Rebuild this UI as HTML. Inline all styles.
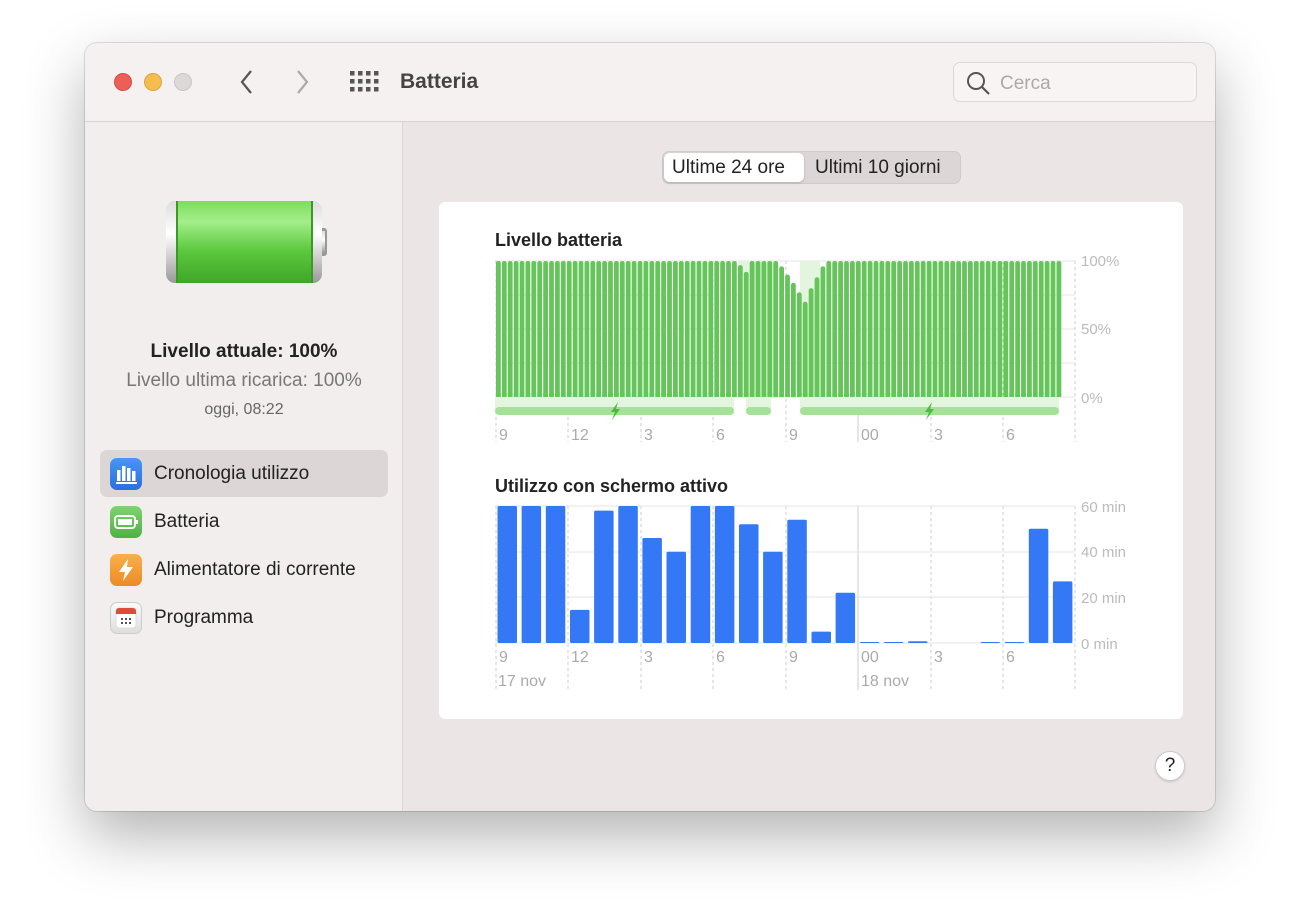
<!DOCTYPE html>
<html><head><meta charset="utf-8"><style>
*{margin:0;padding:0;box-sizing:border-box}
body{width:1300px;height:902px;background:#fff;font-family:"Liberation Sans",sans-serif;position:relative;overflow:hidden}
.win{position:absolute;left:85px;top:43px;width:1130px;height:768px;border-radius:12px;background:#ebe6e5;box-shadow:0 25px 60px rgba(0,0,0,.3),0 0 0 1px rgba(0,0,0,.12);overflow:hidden}
.title{position:absolute;left:0;top:0;width:1130px;height:79px;background:#f6f1f1;border-bottom:1px solid #d9d4d3}
.side{position:absolute;left:0;top:79px;width:318px;height:689px;background:#f3eeee;border-right:1px solid #dcd7d6}
.dot{position:absolute;top:30px;width:18px;height:18px;border-radius:50%}
.t{position:absolute;white-space:nowrap}
.item{position:absolute;left:15px;width:288px;height:47px;border-radius:7px}
.ico{position:absolute;left:10px;top:8px;width:32px;height:32px;border-radius:7px}
.lbl{position:absolute;left:54px;top:13px;font-size:19px;color:#222}
</style></head><body>
<div class="win">
 <div class="title">
  <div class="dot" style="left:29px;background:#ec5f57;border:1px solid #d64a43"></div>
  <div class="dot" style="left:59px;background:#f4bd4f;border:1px solid #dca43c"></div>
  <div class="dot" style="left:89px;background:#dcd8d8;border:1px solid #cbc6c6"></div>
  <svg style="position:absolute;left:150px;top:26px" width="24" height="26"><path d="M16 2 L7 13 L16 24" stroke="#555" stroke-width="2.2" fill="none"/></svg>
  <svg style="position:absolute;left:205px;top:26px" width="24" height="26"><path d="M8 2 L17 13 L8 24" stroke="#aaa" stroke-width="2.2" fill="none"/></svg>
  <svg style="position:absolute;left:264px;top:27px" width="30" height="24" fill="#555">
   <rect x="1" y="1" width="4.5" height="4.5"/><rect x="9" y="1" width="4.5" height="4.5"/><rect x="17" y="1" width="4.5" height="4.5"/><rect x="25" y="1" width="4.5" height="4.5"/>
   <rect x="1" y="9" width="4.5" height="4.5"/><rect x="9" y="9" width="4.5" height="4.5"/><rect x="17" y="9" width="4.5" height="4.5"/><rect x="25" y="9" width="4.5" height="4.5"/>
   <rect x="1" y="17" width="4.5" height="4.5"/><rect x="9" y="17" width="4.5" height="4.5"/><rect x="17" y="17" width="4.5" height="4.5"/><rect x="25" y="17" width="4.5" height="4.5"/></svg>
  <div class="t" style="left:315px;top:27px;font-size:21px;font-weight:bold;color:#444">Batteria</div>
  <div style="position:absolute;left:868px;top:19px;width:244px;height:40px;border:1px solid #ddd8d7;border-radius:7px;background:#f8f4f4">
   <svg style="position:absolute;left:12px;top:8px" width="26" height="26"><circle cx="10" cy="10" r="8" stroke="#555" stroke-width="2" fill="none"/><path d="M16 16 L23 23" stroke="#555" stroke-width="2.2"/></svg>
   <div class="t" style="left:46px;top:10px;font-size:19px;color:#aaa">Cerca</div>
  </div>
 </div>
 <div class="side">
  <svg style="position:absolute;left:80px;top:78px" width="165" height="86">
   <defs><linearGradient id="g" x1="0" y1="0" x2="0" y2="1"><stop offset="0" stop-color="#7edc5e"/><stop offset=".25" stop-color="#a4ee8a"/><stop offset=".6" stop-color="#5cc93e"/><stop offset="1" stop-color="#3fa52a"/></linearGradient>
   <linearGradient id="c" x1="0" y1="0" x2="0" y2="1"><stop offset="0" stop-color="#ddd"/><stop offset=".4" stop-color="#fff"/><stop offset="1" stop-color="#999"/></linearGradient></defs>
   <rect x="150" y="28" width="12" height="28" rx="3" fill="#999"/><rect x="152" y="31" width="8" height="22" fill="url(#c)"/>
   <rect x="1" y="1" width="156" height="82" rx="9" fill="url(#c)"/>
   <rect x="11" y="1" width="137" height="82" fill="url(#g)"/>
   <rect x="11" y="1" width="2" height="82" fill="#3b9a26"/><rect x="146" y="1" width="2" height="82" fill="#3b9a26"/>
  </svg>
  <div class="t" style="left:0;width:318px;text-align:center;top:219px;font-size:19px;font-weight:bold;color:#222">Livello attuale: 100%</div>
  <div class="t" style="left:0;width:318px;text-align:center;top:248px;font-size:19px;color:#777">Livello ultima ricarica: 100%</div>
  <div class="t" style="left:0;width:318px;text-align:center;top:279px;font-size:16px;color:#666">oggi, 08:22</div>
  <div class="item" style="top:328px;background:#dcd6d6"><div class="ico" style="background:linear-gradient(#4a95f5,#2a6fe0)"><svg width="32" height="32" fill="#fff"><rect x="7" y="12" width="3.5" height="11"/><rect x="12" y="8" width="3.5" height="15"/><rect x="17" y="10" width="3.5" height="13"/><rect x="22" y="13" width="3.5" height="10"/><rect x="6" y="24" width="21" height="2"/></svg></div><div class="lbl">Cronologia utilizzo</div></div>
  <div class="item" style="top:376px"><div class="ico" style="background:linear-gradient(#7ed46e,#4eb144)"><svg width="32" height="32"><rect x="5" y="10" width="20" height="12" rx="3" stroke="#fff" stroke-width="2" fill="none"/><rect x="8" y="13" width="14" height="6" fill="#fff"/><rect x="26" y="14" width="2" height="4" fill="#fff"/></svg></div><div class="lbl">Batteria</div></div>
  <div class="item" style="top:424px"><div class="ico" style="background:linear-gradient(#f8b04c,#ec8a26)"><svg width="32" height="32"><path d="M18 5 L9 18 H15 L13 27 L23 13 H17 Z" fill="#fff"/></svg></div><div class="lbl">Alimentatore di corrente</div></div>
  <div class="item" style="top:472px"><div class="ico" style="background:linear-gradient(#fafafa,#dedede);border:1px solid #ccc"><svg width="30" height="30"><rect x="5" y="5" width="20" height="20" rx="3" fill="#fff" stroke="#ddd"/><path d="M5 8 a3 3 0 0 1 3 -3 h14 a3 3 0 0 1 3 3 v3 h-20z" fill="#e04a3d"/><g fill="#555"><rect x="10" y="15" width="2" height="2"/><rect x="14" y="15" width="2" height="2"/><rect x="18" y="15" width="2" height="2"/><rect x="10" y="19" width="2" height="2"/><rect x="14" y="19" width="2" height="2"/><rect x="18" y="19" width="2" height="2"/></g></svg></div><div class="lbl">Programma</div></div>
 </div>
 <div style="position:absolute;left:577px;top:108px;width:299px;height:33px;border-radius:7px;background:#dcd7d6;border:1px solid #d0cbca">
  <div style="position:absolute;left:1px;top:1px;width:140px;height:29px;background:#fff;border-radius:6px;box-shadow:0 1px 2px rgba(0,0,0,.2)"></div>
  <div class="t" style="left:9px;top:5px;font-size:19px;color:#222">Ultime 24 ore</div>
  <div class="t" style="left:152px;top:5px;font-size:19px;color:#222">Ultimi 10 giorni</div>
 </div>
 <div style="position:absolute;left:354px;top:159px;width:744px;height:517px;background:#fff;border-radius:6px"></div>
 <div style="position:absolute;left:1070px;top:708px;width:30px;height:30px;border-radius:50%;background:#fff;border:1px solid #ccc;box-shadow:0 1px 2px rgba(0,0,0,.15);text-align:center;font-size:19px;line-height:28px;color:#222">?</div>
</div>
<svg id="ch" style="position:absolute;left:0;top:0" width="1300" height="902" font-family="Liberation Sans, sans-serif"></svg>
<script>
var s='';
s+='<text x="495" y="246" font-size="18" font-weight="bold" fill="#222">Livello batteria</text>';
s+='<text x="495" y="492" font-size="18" font-weight="bold" fill="#222">Utilizzo con schermo attivo</text>';
[261,295,329,363,397].forEach(function(y){s+='<line x1="495" x2="1075" y1="'+y+'" y2="'+y+'" stroke="#e6e6e6"/>';});
var vx=[496,568,641,713,786,858,931,1003,1075];
vx.forEach(function(x,i){s+='<line x1="'+x+'" x2="'+x+'" y1="261" y2="442" stroke="#ccc" stroke-dasharray="'+(i==5?'':'3,3')+'"/>';
 s+='<line x1="'+x+'" x2="'+x+'" y1="506" y2="690" stroke="#ccc" stroke-dasharray="'+(i==5?'':'3,3')+'"/>';});
s+='<rect x="495" y="397" width="239" height="17" fill="#e3f5df"/><rect x="746" y="397" width="25" height="17" fill="#e3f5df"/><rect x="800" y="397" width="259" height="17" fill="#e3f5df"/>';
s+='<rect x="738" y="261" width="40" height="136" fill="#e3f5df"/><rect x="800" y="261" width="20" height="136" fill="#e3f5df"/>';
s+='<rect x="495" y="407" width="239" height="8" rx="4" fill="#a6e19a"/><rect x="746" y="407" width="25" height="8" rx="4" fill="#a6e19a"/><rect x="800" y="407" width="259" height="8" rx="4" fill="#a6e19a"/>';
[615,929].forEach(function(x){s+='<path d="M'+(x+3)+' 402 L'+(x-4)+' 412 H'+x+' L'+(x-3)+' 420 L'+(x+5)+' 409 H'+(x+1)+' Z" fill="#4cbb3c"/>';});
var lv={41:97,42:92,48:96,49:90,50:84,51:77,52:70,53:80,54:88,55:96};
for(var i=0;i<96;i++){var v=lv[i]||100;var x=496+i*5.9;var h=136*v/100;s+='<rect x="'+x.toFixed(1)+'" y="'+(397-h).toFixed(1)+'" width="4.8" height="'+h.toFixed(1)+'" rx="2.2" fill="#66c55a"/>';s+='<rect x="'+x.toFixed(1)+'" y="393" width="4.8" height="4" fill="#66c55a"/>';}
[['100%',266],['50%',334],['0%',403]].forEach(function(a){s+='<text x="1081" y="'+a[1]+'" font-size="15" fill="#bbb">'+a[0]+'</text>';});
var xl=['9','12','3','6','9','00','3','6'];
xl.forEach(function(t,i){s+='<text x="'+(vx[i]+3)+'" y="440" font-size="16" fill="#aaa">'+t+'</text>';s+='<text x="'+(vx[i]+3)+'" y="662" font-size="16" fill="#aaa">'+t+'</text>';});
s+='<text x="498" y="686" font-size="16" fill="#aaa">17 nov</text><text x="861" y="686" font-size="16" fill="#aaa">18 nov</text>';
[506,552,597,643].forEach(function(y){s+='<line x1="495" x2="1075" y1="'+y+'" y2="'+y+'" stroke="#e6e6e6"/>';});
[['60 min',512],['40 min',557],['20 min',603],['0 min',649]].forEach(function(a){s+='<text x="1081" y="'+a[1]+'" font-size="15" fill="#bbb">'+a[0]+'</text>';});
var u=[60,60,60,14.5,58,60,46,40,60,60,52,40,54,5,22,0.4,0.4,0.8,0,0,0.4,0.4,50,27];
u.forEach(function(v,i){if(!v)return;var h=Math.max(137*v/60,1);var x=497.5+i*24.15;s+='<rect x="'+x.toFixed(1)+'" y="'+(643-h).toFixed(1)+'" width="19.5" height="'+h.toFixed(1)+'" rx="1.5" fill="#3478f6"/>';});
document.getElementById('ch').innerHTML=s;
</script>
</body></html>
